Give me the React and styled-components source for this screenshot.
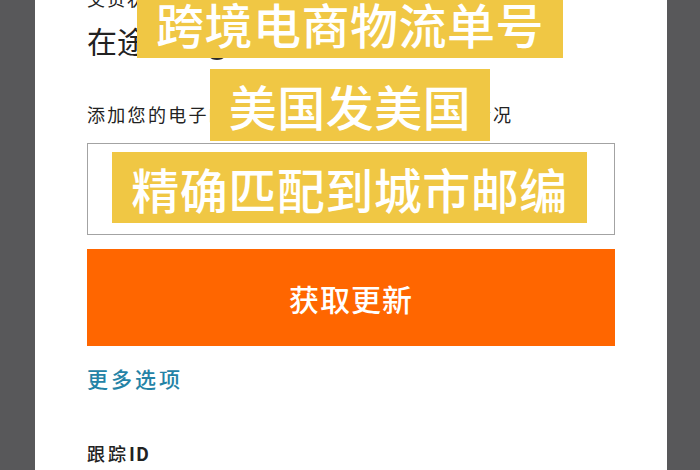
import React from "react";
import styled, { createGlobalStyle } from "styled-components";

const Global = createGlobalStyle`
  html, body { margin: 0; padding: 0; background: #58585a; }
  body { font-family: "Noto Sans CJK SC", "Noto Sans", sans-serif; overflow: hidden; }
`;

const Stage = styled.div`
  position: relative;
  width: 700px;
  height: 470px;
  overflow: hidden;
  background: #58585a;
`;

const Card = styled.div`
  margin-left: 35px;
  width: 632px;
  height: 470px;
  background: #ffffff;
  box-sizing: border-box;
  padding: 0 52px 0 52px;
  display: flex;
  flex-direction: column;
  color: #222;
`;

const TopLine = styled.div`
  font-size: 18px;
  line-height: 20px;
  margin-top: -12px;
  letter-spacing: 2px;
`;

const Status = styled.div`
  display: flex;
  align-items: center;
  gap: 8px;
  font-size: 30px;
  line-height: 40px;
  margin-top: 12px;
`;

const Dot = styled.span`
  width: 24px;
  height: 24px;
  border-radius: 50%;
  background: #2a2a2a;
  margin-top: 16px;
  margin-left: 20px;
`;

const Hint = styled.div`
  font-size: 18px;
  line-height: 24px;
  margin-top: 42px;
  letter-spacing: 2.3px;
  white-space: nowrap;
`;

const InputBox = styled.div`
  margin-top: 17px;
  height: 92px;
  box-sizing: border-box;
  border: 1px solid #a3a3a3;
  background: #fff;
`;

const Button = styled.button`
  margin-top: 14px;
  height: 97px;
  border: none;
  background: #ff6600;
  color: #fff;
  font-family: "Noto Sans CJK SC", sans-serif;
  font-size: 30px;
  font-weight: 500;
  letter-spacing: 1px;
  padding: 0;
`;

const MoreLink = styled.a`
  margin-top: 17px;
  font-size: 21px;
  line-height: 30px;
  font-weight: 500;
  color: #2483a6;
  letter-spacing: 3px;
  text-decoration: none;
`;

const FieldLabel = styled.div`
  margin-top: 48px;
  font-size: 18px;
  line-height: 24px;
  letter-spacing: 3px;
  font-weight: 500;
  & b { font-weight: 700; letter-spacing: 1px; }
`;

const Banner = styled.div`
  position: absolute;
  box-sizing: border-box;
  background: #f0c744;
  color: #ffffff;
  font-family: "Noto Sans CJK SC", sans-serif;
  font-weight: 500;
  font-size: 48px;
  letter-spacing: 0.5px;
  display: flex;
  align-items: center;
  justify-content: center;
  white-space: nowrap;
`;

const banners = [
  { text: "跨境电商物流单号", left: 137, top: -12, width: 426, height: 70 },
  { text: "美国发美国", left: 210, top: 69, width: 280, height: 72 },
  { text: "精确匹配到城市邮编", left: 112, top: 152, width: 475, height: 71 },
];

export default function App() {
  return (
    <Stage>
      <Global />
      <Card>
        <TopLine>交货状态</TopLine>
        <Status>
          在途中
          <Dot />
        </Status>
        <Hint>添加您的电子邮件地址，以接收最新的运输情况</Hint>
        <InputBox />
        <Button>获取更新</Button>
        <MoreLink href="#">更多选项</MoreLink>
        <FieldLabel>
          跟踪<b>ID</b>
        </FieldLabel>
      </Card>
      {banners.map((b) => (
        <Banner
          key={b.text}
          style={{ left: b.left, top: b.top, width: b.width, height: b.height }}
        >
          {b.text}
        </Banner>
      ))}
    </Stage>
  );
}
